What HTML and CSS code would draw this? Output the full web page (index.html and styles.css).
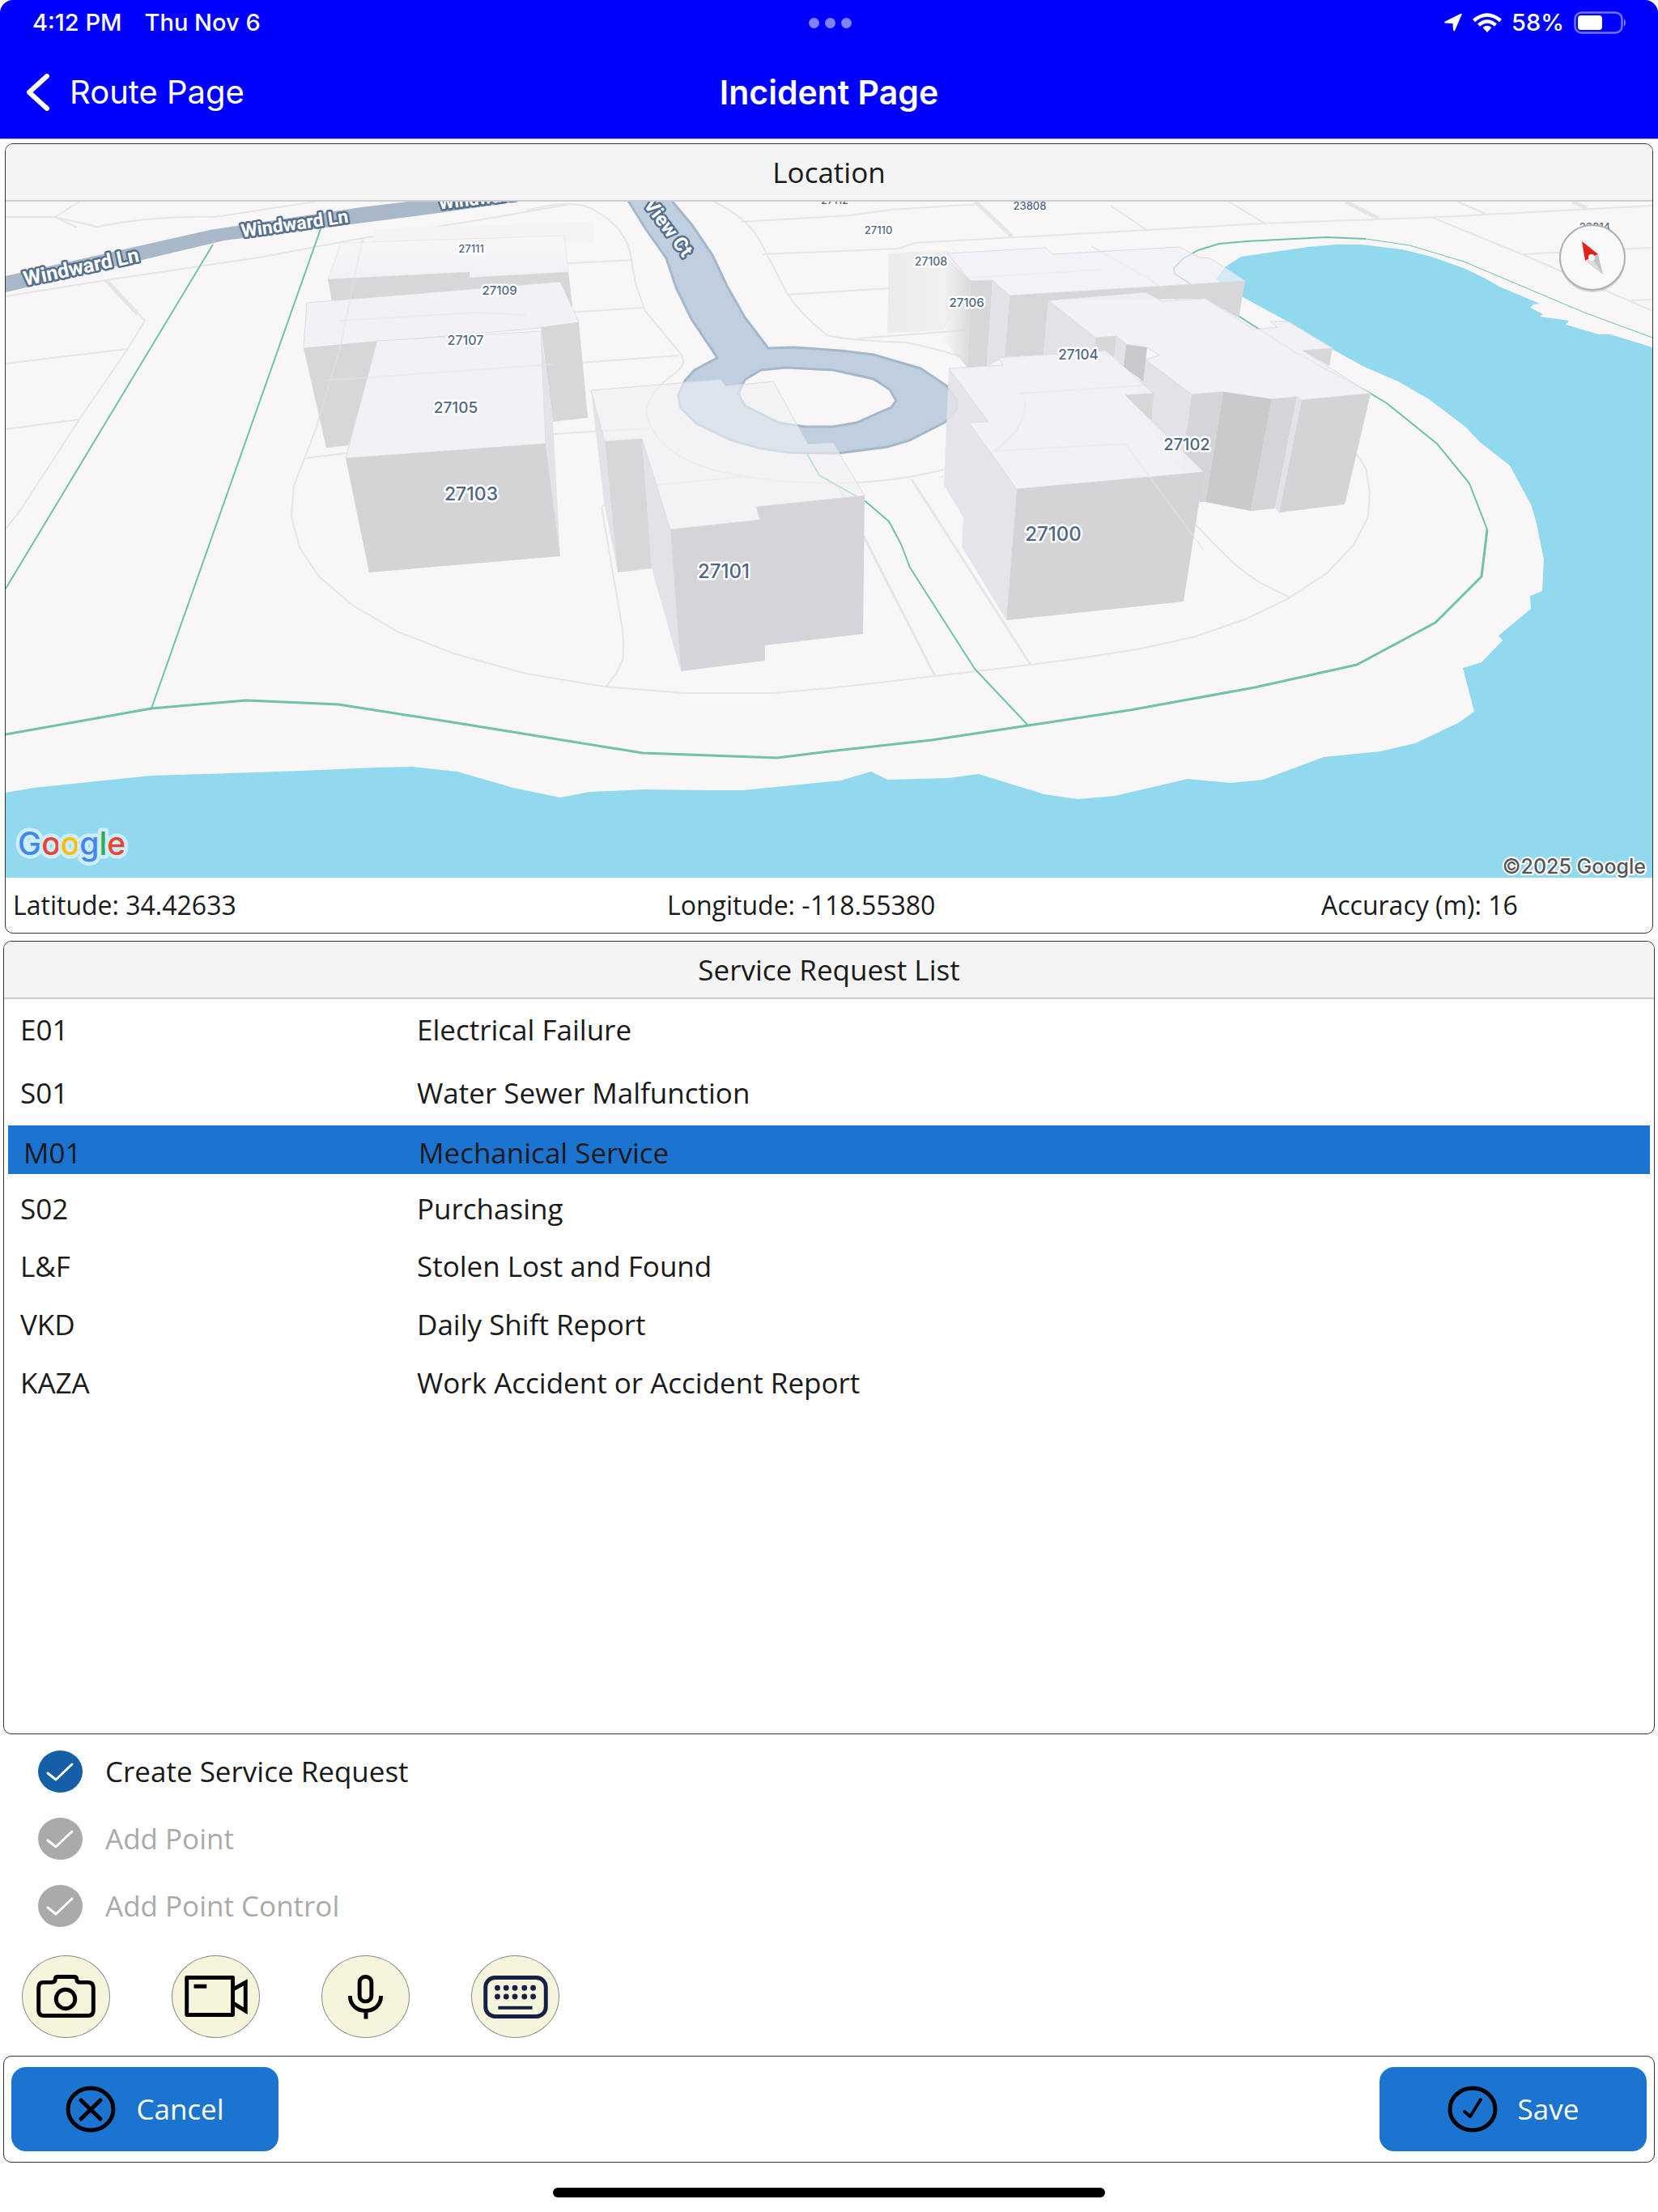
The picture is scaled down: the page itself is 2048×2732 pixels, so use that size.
FILE: index.html
```html
<!DOCTYPE html>
<html lang="en">
<head>
<meta charset="utf-8">
<meta name="viewport" content="width=device-width, initial-scale=1">
<title>Incident Page</title>
<link rel="stylesheet" href="styles.css">
</head>
<body>
<header class="top">
  <div class="status">
    <div class="status-left"><span>4:12 PM</span><span>Thu Nov 6</span></div>
    <div class="dots"><i></i><i></i><i></i></div>
    <div class="status-right">
      <svg width="24" height="22" viewBox="0 0 24 22"><path d="M23 0 L14 21 Q12.500 22 12 20 L11.500 12 L2 11.500 Q0 10.500 2 9.500 L21 0 Q23-1 23 0Z" fill="#fff"/></svg>
      <svg class="wifi" width="36" height="24" viewBox="0 0 36 24"><g fill="none" stroke="#fff" stroke-width="4.500"><path d="M1.500 9.500 Q18-4.500 34.500 9.500"/><path d="M7.500 15 Q18 6 28.500 15"/></g><path d="M12.500 18 Q18 13.500 23.500 18 L18 24Z" fill="#fff"/></svg>
      <span>58%</span>
      <svg class="battery" width="66" height="28" viewBox="0 0 66 28"><rect x="1.500" y="1.500" width="58" height="25" rx="8" fill="none" stroke="#fff" stroke-opacity=".45" stroke-width="2.500"/><rect x="5" y="5" width="30" height="18" rx="4" fill="#fff"/><path d="M62 9 Q66 14 62 19Z" fill="#fff" fill-opacity=".5"/></svg>
    </div>
  </div>
  <nav class="nav">
    <a class="back" href="#"><svg width="30" height="46" viewBox="0 0 30 46"><path d="M26 3 L4 23 L26 43" fill="none" stroke="#fff" stroke-width="6" stroke-linecap="round" stroke-linejoin="round"/></svg>Route Page</a>
    <h1>Incident Page</h1>
  </nav>
</header>

<main class="page">
  <section class="panel location">
    <h2>Location</h2>
    <svg class="map" viewBox="7 249 2034 835" role="img" aria-label="Map">
      <defs>
        <linearGradient id="fade" x1="0" x2="1" y1="0" y2="0"><stop offset="0" stop-color="#dcdcde" stop-opacity="0"/><stop offset="1" stop-color="#d8d9da"/></linearGradient>
        <linearGradient id="fadeUp" x1="0" x2="0" y1="0" y2="1"><stop offset="0" stop-color="#f8f6f7"/><stop offset="1" stop-color="#f0f0f6"/></linearGradient>
        <linearGradient id="ghost" x1="0" x2="1" y1="0" y2="0"><stop offset="0" stop-color="#ebebeb"/><stop offset="1" stop-color="#f4f3f4"/></linearGradient>
      </defs>
      <rect x="0" y="240" width="2048" height="850" fill="#f8f6f7"/>
      <g class="lot">
        <path d="M7 268 H68 L120 280 Q190 266 265 268 L390 249 M68 268 L98 249 M68 268 L95 281"/>
        <path d="M7 366 L131 346 L320 318 L448 294 L590 272 L700 253"/>
        <path d="M131 346 L179 396 L157 432 L98 518 L24 632 L7 653 M7 449 L157 431 M7 530 L98 518"/>
        <path class="lot-wide" d="M131 346 L170 388"/>
        <path d="M448 294 L420 430 L390 530 L363 600 L360 638 L370 676 L394 712 L436 748 L491 780 L563 808 L650 832 L747 848 L845 856 L955 856 L1024 850 L1060 846 L1155 835 L1273 821 L1340 812 L1410 801 L1477 786 L1540 764 L1590 740 L1640 707 L1672 673 L1690 638 L1692 608 L1687 578 L1652 525 L1600 480 L1420 345 L1348 304"/>
        <path d="M375 566 L427 560 L683 536 L803 529 M748 849 L762 830 L769 815 Q772 790 766 760 L743 626 L780 602 L925 588"/>
        <path d="M650 260 Q710 244 735 260 Q770 280 778 310 L785 350 L797 384 L840 436 Q850 448 835 460 Q800 485 798 510 Q810 560 880 580 Q960 600 1060 596 Q1160 590 1230 557 Q1280 530 1266 495 Q1250 450 1120 423 Q1040 420 1022 414 Q990 390 972 362 L940 300 Q925 270 882 249"/>
        <path d="M650 328 L782 321 M650 389 L795 380 M650 453 L838 439 M915 274 L1050 266 L1100 259 L1210 252 M942 314 L1110 307 L1130 300 L1560 276 L1780 268 L2041 254 M972 364 L1160 352 L1180 344 L1360 333"/>
        <path class="lot-wide" d="M1205 249 L1250 292 M1662 249 L1703 270 M1942 249 L1960 257"/>
        <path class="lot-path" d="M1036 602 L1155 835 M1126 592 L1273 821"/>
        <path d="M1060 418 L1350 396 M1372 254 L1416 284 M1518 249 L1564 277 M1800 249 L1835 264 M1770 269 L1880 314 L2041 384 M1882 314 L2041 306 M2015 371 L2041 370"/>
        <path d="M1390 560 L1520 692 Q1550 720 1592 737"/>
      </g>
      <path fill="#91d9ef" d="M2041 429 L1989 413 L1975 413 L1934 401 L1938 396 L1902 391 L1906 388 L1890 380 L1894 376 L1902 375 L1852 354 L1835 344 L1810 332 L1768 317 L1732 308 L1681 302 L1652 302 L1616 305 L1533 317 L1513 330 L1502 345 L1535 367 L1585 394 L1645 431 L1685 453 L1727 471 L1765 493 L1810 527 L1828 546 L1865 575 L1892 625 L1898 647 L1907 691 L1905 730 L1890 736 L1891 752 L1851 785 L1856 791 L1830 818 L1807 825 L1821 879 L1801 893 L1748 918 L1705 928 L1635 935 L1560 963 L1520 967 L1467 962 L1377 983 L1331 987 L1290 981 L1209 956 L1171 961 L1096 963 L1076 953 L1038 964 L918 976 L872 976 L797 975 L728 978 L692 985 L634 973 L565 953 L509 947 L464 948 L372 952 L251 956 L186 958 L42 973 L7 979 V1085 H2041Z"/>
      <path fill="#a8b8c9" d="M7 341 L259 284 L446 256 L504 249 H640 L542 263 L473 272 L277 297 L7 361Z"/>
      <path fill="#bfcfdf" stroke="#a5b8ca" stroke-width="3" fill-rule="evenodd" d="M771 240 L797 282 L823 319 L835 355 L854 394 L886 442 L858 457 L846 470 L838 487 L840 503 L860 523 L904 544 L940 554 L976 559 L1034 560 L1096 552 L1123 544 L1168 521 L1181 507 L1182 495 L1170 477 L1137 455 L1079 438 L1038 433 L980 429 L949 430 L920 392 L898 353 L880 315 L855 278 L823 240Z M940 457 L971 454 L1029 457 L1079 468 L1099 481 L1107 495 L1101 503 L1058 522 L1029 527 L994 527 L962 522 L920 501 L912 486 L920 469Z"/>
      <g fill="none" stroke="#6fc4a4" stroke-linejoin="round">
        <path stroke-width="2" d="M263 302 L7 727 M397 280 L187 875"/>
        <path stroke-width="3" d="M7 907 L187 875 L304 865 L418 870 L565 893 L794 930 L960 936 L1024 928 L1151 914 L1270 896 L1396 877 L1550 849 L1676 821 L1773 769 L1830 712 L1837 654"/>
        <path stroke-width="2" d="M1837 654 L1815 597 L1775 548 L1713 498 L1693 486 L1598 434 L1531 391 L1451 338 L1450 331 L1462 319 L1480 309 L1506 301 L1540 298 L1638 293 L1687 295"/>
        <path stroke-width="1" d="M1687 295 L1741 303 L1808 323 L1957 386 L2041 417"/>
        <path stroke-width="2" d="M997 561 L1012 587 L1058 613 L1070 620 L1098 644 L1113 672 L1124 701 L1204 826 L1270 896"/>
      </g>

      <!-- west row of buildings -->
      <path class="ghost" d="M461 282 L733 274 V300 L461 304Z"/>
      <path fill="url(#fadeUp)" stroke="#e8e8eb" d="M421 300 L697 291 L702 336 L580 343 V336 L405 345Z"/>
      <path class="wall" d="M405 345 L580 336 V343 L702 336 L707 378 L410 373Z"/>
      <path class="roof" d="M379 374 L692 348 L715 398 L668 405 L375 430Z"/>
      <path class="wall" d="M375 430 L466 421 L431 550 L403 553Z M715 398 L726 516 L683 521 L668 404Z"/>
      <path class="side" d="M668 409 L674 548 L692 687 L683 520Z"/>
      <path class="roof" d="M427 566 L466 421 L668 409 L674 548Z"/>
      <path class="front" d="M427 566 L674 548 L692 687 L456 707Z"/>
      <path class="lot" d="M420 396 L590 386 L650 389 M400 470 L683 450 M448 294 L420 430 L390 530" opacity=".5"/>

      <!-- 27101 -->
      <path class="side" d="M730 482 L747 545 L763 707 L746 620Z M793 542 L828 654 L841 829 L805 702Z"/>
      <path class="wall" d="M747 545 L793 542 L805 702 L763 707Z"/>
      <path class="front cool" d="M828 654 L939 642 L934 626 L1068 612 L1066 783 L945 797 V816 L841 829Z"/>
      <path class="roof glass" d="M730 482 L890 469 L896 477 L955 471 L998 549 L1029 547 L1068 612 L934 626 L939 642 L828 654 L793 542 L747 545Z"/>

      <!-- east row of buildings -->
      <path fill="url(#ghost)" d="M1098 313 L1170 309 L1199 347 L1165 408 L1096 411Z"/>
      <path fill="url(#fade)" d="M1165 313 L1199 347 L1195 454 L1165 420Z"/>
      <path class="wall" d="M1199 347 L1226 346 L1219 453 L1195 454Z M1247 365 L1538 347 L1530 393 L1489 369 L1295 371 L1289 438 L1241 441Z"/>
      <path class="side" d="M1226 346 L1247 365 L1241 441 L1219 453Z"/>
      <path class="roof glass-more" d="M1170 313 L1291 306 L1301 314 L1457 305 L1482 318 L1495 319 L1538 347 L1247 365 L1226 346 L1199 347Z"/>
      <path class="side" d="M1295 371 L1353 417 L1366 433 L1289 438Z M1379 415 L1391 425 L1388 453 L1376 440Z M1415 444 L1472 487 L1465 590 L1400 500Z"/>
      <path class="wall" d="M1353 417 L1379 415 L1376 442 L1353 435Z M1609 433 L1646 430 L1642 452Z"/>
      <path class="dark" d="M1391 425 L1417 429 L1412 471 L1388 453Z"/>
      <path class="roof glass-less" d="M1295 371 L1415 361 L1435 372 L1489 369 L1549 407 L1578 404 L1569 397 L1591 397 L1646 430 L1609 433 L1693 486 L1608 494 L1602 490 L1571 493 L1511 484 L1472 487 L1415 444 L1432 439 L1417 429 L1391 425 L1379 415 L1353 417Z"/>
      <path class="front cool" d="M1472 487 L1511 484 L1489 620 L1480 620 L1460 580Z M1571 493 L1602 490 L1575 628 L1545 631Z"/>
      <path class="dark" d="M1511 484 L1571 493 L1545 631 L1489 620Z"/>
      <path class="side" d="M1602 490 L1608 494 L1580 633 L1575 628Z"/>
      <path class="front" d="M1608 494 L1693 486 L1661 623 L1580 633Z"/>

      <!-- 27100 -->
      <path class="side glass-less" d="M1172 455 L1221 521 L1197 522 L1256 604 L1243 766 L1188 675 L1190 639 L1166 599Z"/>
      <path class="roof glass-less" d="M1172 455 L1239 451 L1233 442 L1366 433 L1425 486 L1390 488 L1487 583 L1256 604 L1197 522 L1221 521Z"/>
      <path class="wall" d="M1390 488 L1425 486 L1422 519Z"/>
      <path class="front" d="M1256 604 L1487 583 L1462 743 L1243 766Z"/>
      <path class="lot" opacity=".5" d="M1260 486 L1425 475 M1230 557 L1390 548 L1487 680 M1160 590 Q1270 550 1266 495"/>

      <g class="number">
        <text x="1031" y="252" font-size="13">27112</text>
        <text x="1272" y="259" font-size="13">23808</text>
        <text x="1970" y="285" font-size="13">23814</text>
        <text x="582" y="312" font-size="13">27111</text>
        <text x="1085" y="289" font-size="13">27110</text>
        <text x="617" y="364" font-size="15">27109</text>
        <text x="1150" y="328" font-size="14">27108</text>
        <text x="575" y="426" font-size="16">27107</text>
        <text x="1194" y="379" font-size="15">27106</text>
        <text x="563" y="510" font-size="19">27105</text>
        <text x="1332" y="444" font-size="17">27104</text>
        <text x="582" y="618" font-size="23">27103</text>
        <text x="1466" y="556" font-size="20">27102</text>
        <text x="894" y="714" font-size="24">27101</text>
        <text x="1301" y="668" font-size="24">27100</text>
      </g>
      <g class="street">
        <text font-size="25" transform="translate(102 338) rotate(-12)">Windward Ln</text>
        <text font-size="23" transform="translate(365 284) rotate(-8)">Windward Ln</text>
        <text font-size="22" transform="translate(606 251) rotate(-7)">Windward Ln</text>
        <text font-size="24" transform="translate(819 286) rotate(53)">View Ct</text>
      </g>
      <circle cx="1967" cy="320" r="41" fill="#999" opacity=".35"/>
      <circle cx="1967" cy="318" r="40" fill="#fdfcfc" fill-opacity=".93" stroke="#b0b0b0" stroke-width="2"/>
      <path fill="#e3211d" d="M1954 298 L1974 314 L1958 322Z"/>
      <path fill="#c4c4c4" d="M1980 339 L1974 314 L1958 322Z"/><path fill="#dcdcdc" d="M1980 339 L1966 318 L1958 322Z"/>
      <circle cx="1966" cy="318" r="4" fill="#fff"/>
      <text class="logo" x="22" y="1056"><tspan fill="#4285f4">G</tspan><tspan fill="#ea4335">o</tspan><tspan fill="#fbbc05">o</tspan><tspan fill="#4285f4">g</tspan><tspan fill="#34a853">l</tspan><tspan fill="#ea4335">e</tspan></text>
      <text class="credit" x="2033" y="1079">©2025 Google</text>
    </svg>
    <div class="coords"><span>Latitude: 34.42633</span><span>Longitude: -118.55380</span><span>Accuracy (m): 16</span></div>
  </section>

  <section class="panel requests">
    <h2>Service Request List</h2>
    <table>
      <tbody>
        <tr class="tall"><td>E01</td><td>Electrical Failure</td></tr>
        <tr class="tall"><td>S01</td><td>Water Sewer Malfunction</td></tr>
        <tr class="selected" aria-selected="true"><td>M01</td><td>Mechanical Service</td></tr>
        <tr class="after"><td>S02</td><td>Purchasing</td></tr>
        <tr><td>L&amp;F</td><td>Stolen Lost and Found</td></tr>
        <tr><td>VKD</td><td>Daily Shift Report</td></tr>
        <tr><td>KAZA</td><td>Work Accident or Accident Report</td></tr>
      </tbody>
    </table>
  </section>

  <section class="options">
    <label class="option"><span class="tick"><input type="checkbox" checked><svg viewBox="0 0 55 52"><path d="M12 28 L22 36 L42 17"/></svg></span>Create Service Request</label>
    <label class="option off"><span class="tick"><input type="checkbox" checked disabled><svg viewBox="0 0 55 52"><path d="M12 28 L22 36 L42 17"/></svg></span>Add Point</label>
    <label class="option off"><span class="tick"><input type="checkbox" checked disabled><svg viewBox="0 0 55 52"><path d="M12 28 L22 36 L42 17"/></svg></span>Add Point Control</label>
  </section>

  <section class="media">
    <button type="button" aria-label="Camera"><svg viewBox="0 0 109 102"><g fill="none" stroke="#000" stroke-width="5" stroke-linejoin="round"><path d="M26 33 H36 Q41 33 41 29 Q41 26 44 26 H64 Q68 26 68 29 Q68 33 72 33 H82 Q89 33 89 40 V68 Q89 75 82 75 H27 Q20 75 20 68 V40 Q20 33 26 33Z"/><circle cx="54" cy="54" r="12"/></g></svg></button>
    <button type="button" aria-label="Video"><svg viewBox="0 0 109 102"><g fill="none" stroke="#000" stroke-width="5"><rect x="18" y="27" width="58" height="47" stroke-linejoin="round"/><path d="M27 38 H43 M76 42 L92 33 V69 L76 59"/></g></svg></button>
    <button type="button" aria-label="Microphone"><svg viewBox="0 0 109 102"><g fill="none" stroke="#000" stroke-width="5"><rect x="47" y="26" width="15" height="31" rx="7"/><path d="M35 50 C35 75 74 75 74 50 M55 69 V79"/></g></svg></button>
    <button type="button" aria-label="Keyboard"><svg viewBox="0 0 109 102"><rect x="17" y="27" width="76" height="49" rx="12" fill="none" stroke="#161f45" stroke-width="5"/><path d="M32 40h0M43 40h0M54 40h0M66 40h0M77 40h0M32 51h0M43 51h0M54 51h0M66 51h0M77 51h0" stroke="#161f45" stroke-width="7" stroke-linecap="round"/><path d="M33 65 H76" stroke="#161f45" stroke-width="4"/></svg></button>
  </section>

  <section class="panel actions">
    <button type="button"><svg width="62" height="58" viewBox="0 0 62 58"><g fill="none" stroke="#000" stroke-width="5" stroke-linecap="round"><ellipse cx="31" cy="29" rx="28" ry="26"/><path d="M19 18 L43 41 M43 18 L19 41"/></g></svg>Cancel</button>
    <button type="button"><svg width="62" height="58" viewBox="0 0 62 58"><g fill="none" stroke="#000" stroke-width="5" stroke-linecap="round" stroke-linejoin="round"><ellipse cx="31" cy="29" rx="28" ry="26"/><path stroke-width="4" d="M21 32 L28 38 L41 17"/></g></svg>Save</button>
  </section>
</main>
<div class="home"></div>
</body>
</html>
```

FILE: styles.css
```css
* { box-sizing: border-box; }

body {
  margin: 0;
  min-height: 100vh;
  display: flex;
  flex-direction: column;
  background: #fff;
  color: #1a1a1a;
  font: 35px/44px "Open Sans", sans-serif;
}

button { font: inherit; cursor: pointer; }

.top {
  height: 172px;
  background: #00f;
  color: #fff;
  border-radius: 16px 16px 0 0;
  border-bottom: 1px solid #b2b2b2;
  font-family: Inter, sans-serif;
}

.status {
  display: grid;
  grid-template-columns: 1fr auto 1fr;
  align-items: center;
  height: 56px;
  padding: 0 38px 0 40px;
  font-size: 29px;
  font-weight: 500;
}

.status-left { display: flex; gap: 28px; }
.dots { display: flex; gap: 7px; }
.dots i { width: 13px; height: 13px; border-radius: 50%; background: #8080ff; }
.status-right { display: flex; align-items: center; justify-content: flex-end; gap: 12px; }

.nav {
  display: grid;
  grid-template-columns: 1fr auto 1fr;
  align-items: center;
  height: 115px;
  padding: 0 32px;
  font-size: 40px;
}

.nav h1 { margin: 0; font-size: 41px; font-weight: 600; }
.back { display: flex; align-items: center; gap: 24px; color: #fff; text-decoration: none; }

.page {
  flex: 1;
  display: flex;
  flex-direction: column;
  padding: 5px 4px 0;
}

.panel {
  border: 1px solid #333;
  border-radius: 10px;
  overflow: hidden;
}

.panel h2 {
  margin: 0;
  height: 71px;
  line-height: 70px;
  background: #f4f4f4;
  border-bottom: 2px solid #ccc;
  text-align: center;
  font-size: 35px;
  font-weight: 400;
}

.location { margin: 0 2px 9px; }
.map { display: block; width: 100%; height: auto; }

.lot { fill: none; stroke: #e6e6e7; stroke-width: 2; }
.lot-path { stroke-width: 3; }
.lot-wide { stroke-width: 5; }
.roof { fill: #f1f1f6; stroke: #dcdce2; stroke-width: 1; }
.wall { fill: #d7d7da; }
.front { fill: #d4d4d6; }
.cool { fill: #d5d4d9; }
.side { fill: #e3e2e8; }
.dark { fill: #cacacc; }
.ghost { fill: #f5f4f5; }
.glass { fill-opacity: .62; }
.glass-more { fill-opacity: .7; }
.glass-less { fill-opacity: .9; }

.number text {
  font-family: Inter, sans-serif;
  font-weight: 500;
  text-anchor: middle;
  fill: #506784;
  stroke: #fff;
  stroke-width: 5px;
  stroke-linejoin: round;
  paint-order: stroke;
}

.street text {
  font-family: Roboto, sans-serif;
  font-weight: 700;
  text-anchor: middle;
  fill: #fff;
  stroke: #566f8e;
  stroke-width: 5px;
  stroke-linejoin: round;
  paint-order: stroke;
}

.logo {
  font: 500 39px Inter, sans-serif;
  stroke: #cdeef8;
  stroke-width: 9px;
  stroke-linejoin: round;
  paint-order: stroke;
}

.credit {
  font: 500 25px Inter, sans-serif;
  text-anchor: end;
  fill: #555;
  stroke: #fff;
  stroke-width: 4px;
  paint-order: stroke;
}

.coords {
  display: grid;
  grid-template-columns: 2fr 2fr 1fr;
  align-items: center;
  height: 68px;
  padding: 0 5px 0 9px;
  font-size: 32px;
}

.requests { flex: 1; }

.requests table {
  width: calc(100% - 10px);
  margin: 0 5px;
  border-collapse: collapse;
  table-layout: fixed;
}

.requests td { height: 72px; padding: 0 0 0 15px; }
.requests td:first-child { width: 490px; }
.requests .tall td { height: 78px; padding-bottom: 3px; }
.requests .after td { height: 78px; padding-top: 7px; }
.requests .selected td { height: 60px; padding: 8px 0 0 17px; background: #1c74d1; }
.requests .selected td:first-child { padding-left: 19px; }

.options { display: flex; flex-direction: column; padding: 4px 0 0 47px; margin-left: -4px; }
.option { display: flex; align-items: center; gap: 28px; height: 83px; }
.option.off { color: #aaa; }
.tick { display: grid; width: 55px; height: 52px; }
.tick input, .tick svg { grid-area: 1 / 1; width: 55px; height: 52px; margin: 0; }
.tick input { appearance: none; border-radius: 50%; background: #155fa9; }
.tick input:disabled { background: #aaa; }
.tick svg { pointer-events: none; fill: none; stroke: #fff; stroke-width: 3px; stroke-linecap: round; stroke-linejoin: round; }

.media { display: flex; gap: 76px; padding: 20px 0 22px 23px; }

.media button {
  width: 109px;
  height: 102px;
  padding: 0;
  border: 1px solid #888;
  border-radius: 50%;
  background: #f5f5dc;
}

.media svg { display: block; width: 100%; height: 100%; }

.actions {
  display: flex;
  justify-content: space-between;
  padding: 13px 9px;
}

.actions button {
  display: flex;
  align-items: center;
  justify-content: center;
  gap: 25px;
  width: 330px;
  height: 104px;
  border: 0;
  border-radius: 18px;
  background: #1c74d1;
  color: #fff;
}

.home {
  width: 682px;
  height: 12px;
  margin: 31px auto 18px;
  border-radius: 6px;
  background: #000;
}
```
